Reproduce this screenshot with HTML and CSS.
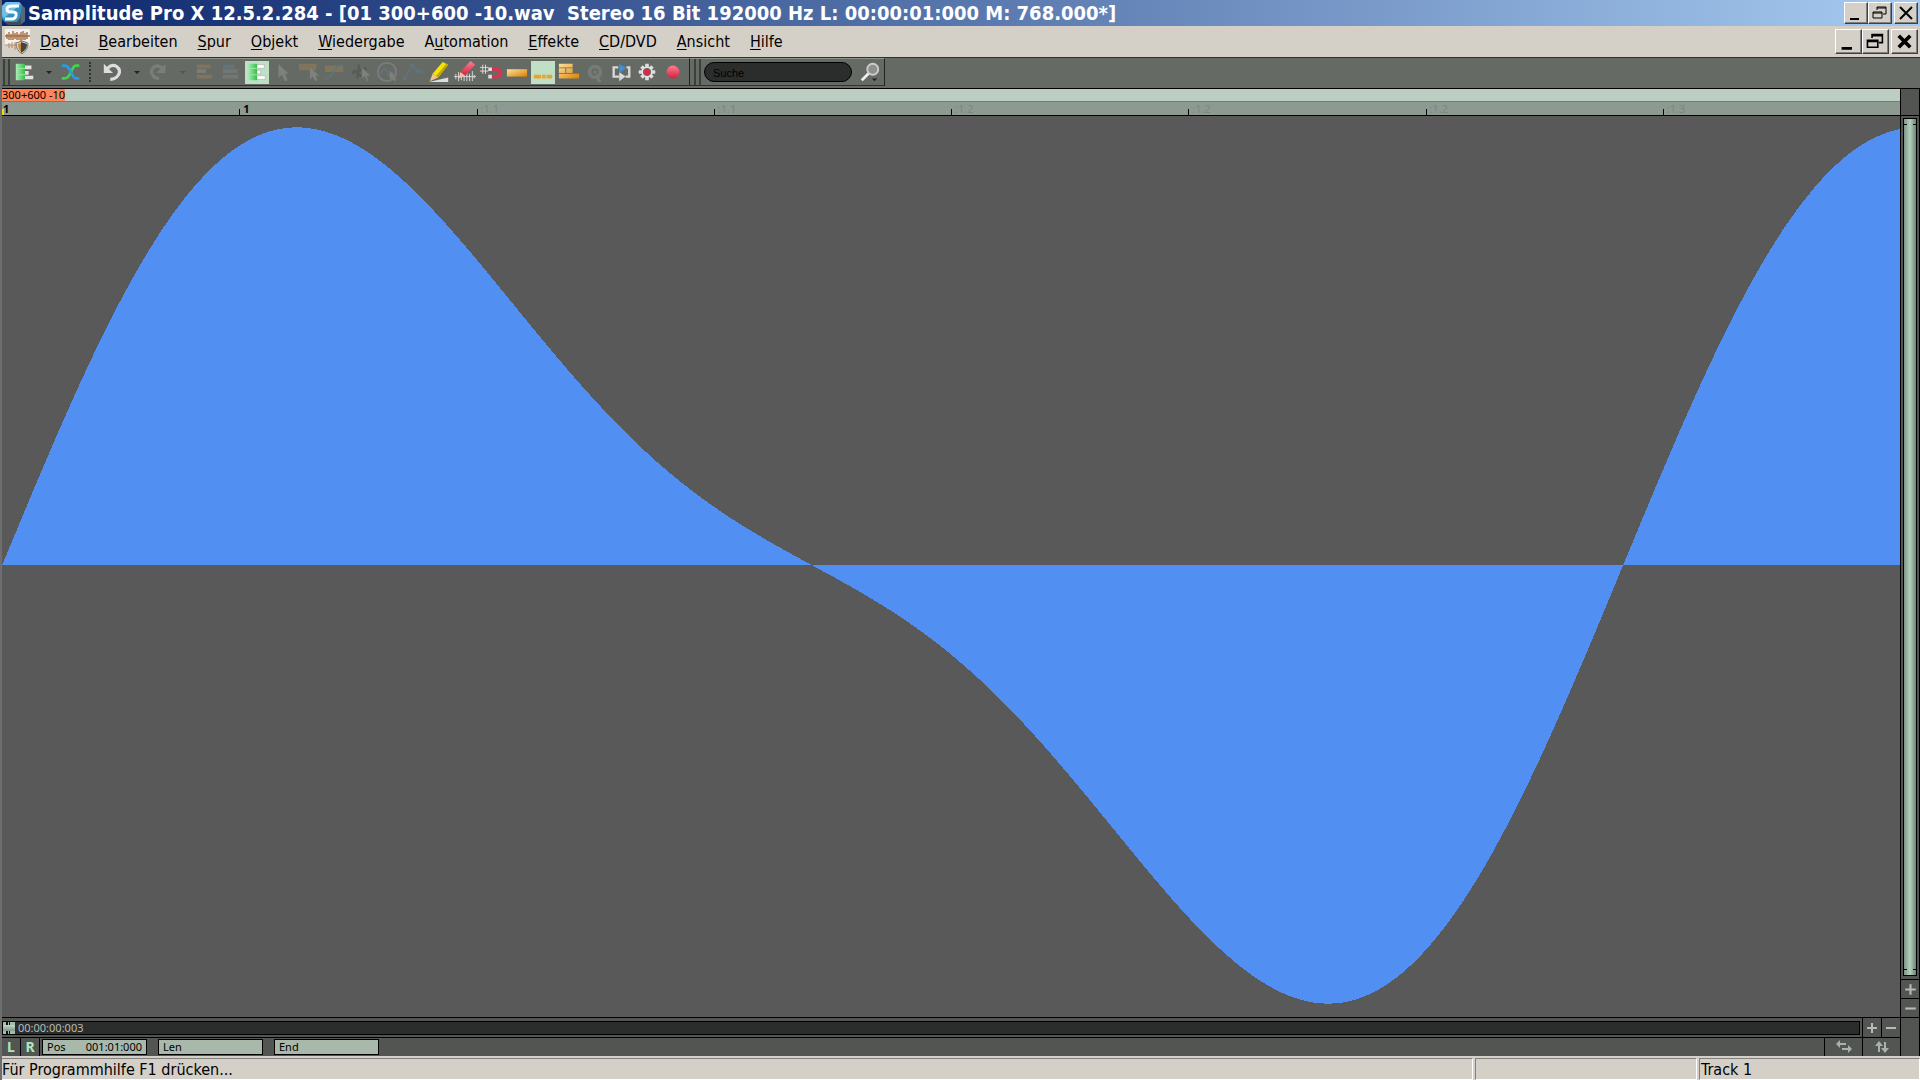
FILE: index.html
```html
<!DOCTYPE html>
<html lang="de">
<head>
  <meta charset="UTF-8">
  <meta name="viewport" content="width=device-width, initial-scale=1.0">
  <title>Samplitude Pro X</title>
  <link rel="stylesheet" href="styles.css">
</head>
<body>
  <header class="titlebar">
    <svg class="app-icon" viewBox="0 0 24 24">
      <path d="M5 3h14l4 4v13l-4 4H6l-5-4z" fill="#3c4c5c"/>
      <path d="M18 3l5 4v13l-4 3z" fill="#56697a"/>
      <path d="M4 1h13l3 3-2 13-3 4H3l-3-3V5z" fill="#2f93c4"/>
      <path d="M4 1h13l2 2L2 17 0 15V5z" fill="#6fc0e4"/>
      <path d="M17 5H10Q5 5 5 8t4 3h2q4 0 3 4-1 3-4 3H3" fill="none" stroke="#fff" stroke-width="3"/>
    </svg>
    <h1>Samplitude Pro X 12.5.2.284 - [01 300+600 -10.wav&nbsp; Stereo 16 Bit 192000 Hz L: 00:00:01:000 M: 768.000*]</h1>
    <div class="win-buttons">
      <button aria-label="Minimieren"><svg viewBox="0 0 20 18"><path d="M4 15h9" stroke="#000" stroke-width="2"/></svg></button>
      <button aria-label="Wiederherstellen"><svg viewBox="0 0 20 18"><path d="M7 6V3h9v7h-3M7 4h9M3 8h9v6H3zM3 9h9" fill="none" stroke="#000"/></svg></button>
      <button class="close" aria-label="Schließen"><svg viewBox="0 0 20 18"><path d="M4 3l12 12M16 3L4 15" stroke="#000" stroke-width="2"/></svg></button>
    </div>
  </header>

  <nav class="menubar">
    <svg class="doc-icon" viewBox="0 0 25 25">
      <rect width="25" height="16" fill="#f4f0ec"/>
      <path d="M0 7h25M2 5v5M4 3v8M6 5v6M8 2v9M10 4v6M12 3v8M14 5v6M16 3v9M18 2v9M20 4v7M22 3v7" stroke="#a56f45" stroke-width="1.4"/>
      <path d="M0 16h12M4 14v5M7 13v6M10 13v8" stroke="#b58a68"/>
      <path d="M11 14l6-2 6 2q0 7-6 11-6-4-6-11z" fill="#e6d6b4" stroke="#777"/>
      <path d="M16 13l6 2q0 6-6 9z" fill="#444"/>
      <path d="M13 15l3-1v9q-3-3-3-8z" fill="#c98a35"/>
    </svg>
    <a href="#"><u>D</u>atei</a>
    <a href="#"><u>B</u>earbeiten</a>
    <a href="#"><u>S</u>pur</a>
    <a href="#"><u>O</u>bjekt</a>
    <a href="#"><u>W</u>iedergabe</a>
    <a href="#">A<u>u</u>tomation</a>
    <a href="#"><u>E</u>ffekte</a>
    <a href="#"><u>C</u>D/DVD</a>
    <a href="#"><u>A</u>nsicht</a>
    <a href="#"><u>H</u>ilfe</a>
    <div class="win-buttons large">
      <button aria-label="Dokument minimieren"><svg viewBox="0 0 20 18"><path d="M4 15h9" stroke="#000" stroke-width="2.4"/></svg></button>
      <button aria-label="Dokument wiederherstellen"><svg viewBox="0 0 20 18"><path d="M7 6V3h9v7h-3M7 4h9M3 8h9v6H3zM3 9h9" fill="none" stroke="#000" stroke-width="1.4"/></svg></button>
      <button class="close" aria-label="Dokument schließen"><svg viewBox="0 0 20 18"><path d="M5 4l10 10M15 4L5 14" stroke="#000" stroke-width="3.2"/></svg></button>
    </div>
  </nav>

  <svg class="defs" width="0" height="0">
    <defs>
      <linearGradient id="orange" x2="1" y2="1"><stop stop-color="#ffe0a0"/><stop offset="1" stop-color="#d98200"/></linearGradient>
      <linearGradient id="green" x2="1"><stop stop-color="#a8eeb2"/><stop offset="1" stop-color="#35c04a"/></linearGradient>
      <linearGradient id="red" x2="0" y2="1"><stop stop-color="#ff7e8e"/><stop offset="1" stop-color="#d3203c"/></linearGradient>
    </defs>
  </svg>

  <div class="toolbar">
    <div class="tools">
      <span class="grip"></span>
      <button class="wide" aria-label="Spuren"><svg viewBox="0 0 24 24"><path d="M12 5h7v4h-7zM12 11h4v4h-4zM12 16h9v4h-9z" fill="#e4e4e4"/><path d="M2 3h10v18H2z" fill="url(#green)"/><path d="M2 8h10M2 15h10" stroke="#a8e0b0"/></svg><i class="arrow"></i></button>
      <button aria-label="Crossfade"><svg viewBox="0 0 24 24"><path d="M2 19h3q4 0 7-7t5-7h4" fill="none" stroke="#42d34a" stroke-width="3"/><path d="M2 5h3q4 0 7 7t5 7h4" fill="none" stroke="#2a9de0" stroke-width="3"/></svg></button>
      <span class="dots"></span>
      <button class="wide" aria-label="Rückgängig"><svg viewBox="0 0 24 24"><path d="M6 8q5-5 10-2 5 4 2 9-3 5-9 5" fill="none" stroke="#ddd" stroke-width="3.4"/><path d="M2 3v10h10z" fill="#ddd"/></svg><i class="arrow"></i></button>
      <button class="wide redo" aria-label="Wiederholen" disabled><svg viewBox="0 0 24 24"><path d="M16 8q-5-5-10-1-4 4-1 8 2 4 7 4" fill="none" stroke="#ccc" stroke-width="3.4"/><path d="M19 3v10H9z" fill="#ccc"/></svg><i class="arrow"></i></button>
      <button aria-label="Objekte" disabled><svg viewBox="0 0 24 24"><path d="M3 4h15v4H3zM3 15h17v4H3z" fill="#f0a030"/><path d="M3 9h10v4H3z" fill="#ccc"/></svg></button>
      <button aria-label="Bereiche" disabled><svg viewBox="0 0 24 24"><path d="M3 4h13v4H3z" fill="#4aa0e0"/><path d="M3 9h16v4H3zM3 15h17v4H3z" fill="#aaa"/></svg></button>
      <button class="active" aria-label="Universalmodus"><svg viewBox="0 0 24 24"><path d="M12 4h8v4h-8zM12 10h4v4h-4zM12 16h9v4h-9z" fill="#fff" stroke="#999" stroke-width=".5"/><path d="M2 3h10v18H2z" fill="url(#green)"/><path d="M2 8h10M2 15h10" stroke="#a8e0b0"/></svg></button>
      <button aria-label="Zeiger" disabled><svg viewBox="0 0 24 24"><path d="M7 3v15l4-3 3 7 3-1-3-7h4z" fill="#ddd"/></svg></button>
      <button aria-label="Objektmaus" disabled><svg viewBox="0 0 24 24"><path d="M1 3h19v7H1z" fill="#f0a030"/><path d="M13 7v13l3-3 3 5 2-1-2-5h4z" fill="#ddd"/></svg></button>
      <button aria-label="Kurvenmodus" disabled><svg viewBox="0 0 24 24"><path d="M1 5h20v7H1z" fill="#f0a030"/><path d="M1 19q6 0 9-7t9-7" fill="none" stroke="#4aa0e0" stroke-width="2"/></svg></button>
      <button aria-label="Schneiden" disabled><svg viewBox="0 0 24 24"><path d="M10 4l-2 15M2 13l16-5M4 10l9 7" stroke="#222" stroke-width="2.6"/><path d="M13 7v12l3-3 3 6 1-1-2-5h4z" fill="#ddd"/></svg></button>
      <button aria-label="Scrubbing" disabled><svg viewBox="0 0 24 24"><circle cx="12" cy="12" r="10" fill="none" stroke="#ccc" stroke-width="2"/><path d="M5 14q4-10 7-2t8 0" fill="none" stroke="#4aa0e0" stroke-width="2"/><path d="M15 10v10l3-2 2 4 2-1-2-5z" fill="#ddd"/></svg></button>
      <button aria-label="Automation zeichnen" disabled><svg viewBox="0 0 24 24"><path d="M3 19L11 5l6 6 6 1" fill="none" stroke="#4aa0e0" stroke-width="1.4"/><path d="M1 17h4v4H1zM9 3h4v4H9zM16 9h4v4h-4z" fill="#4aa0e0"/></svg></button>
      <button aria-label="Stift"><svg viewBox="0 0 24 24"><path d="M1 23l21-5v5z" fill="#ddd"/><path d="M5 14L16 1l6 3L11 18z" fill="#f4e400"/><path d="M9 16L20 3l2 1L11 18z" fill="#c0a800"/><path d="M5 14l6 4-9 4z" fill="#f0c48a"/></svg></button>
      <button aria-label="Wellenform zeichnen"><svg viewBox="0 0 24 24"><path d="M0 17h24M2 14v6M5 12v10M8 14v7M11 15v7M14 12v10M17 14v8M20 11v11M22 15v4" stroke="#ddd"/><path d="M7 12L18 0l5 4-11 12z" fill="url(#red)"/><path d="M7 12l5 4-7 3z" fill="#f1c0a0"/></svg></button>
      <button aria-label="Raster"><svg viewBox="0 0 24 24"><path d="M3 4v10M6 4v10M0 7h9M0 11h9" stroke="#ddd"/><path d="M13 9h5q4 0 4 4t-4 4h-5" fill="none" stroke="#e02f4c" stroke-width="3.4"/><path d="M9 7h4v4H9zM9 15h4v4H9z" fill="#ddd"/></svg></button>
      <button aria-label="Objekt"><svg viewBox="0 0 24 24"><path d="M1 9h22v8H1z" fill="url(#orange)"/></svg></button>
      <button class="active" aria-label="Takes"><svg viewBox="0 0 24 24"><path d="M2 15h8v4H2zM11 15h4v4h-4zM16 15h6v4h-6z" fill="#eaa32e"/></svg></button>
      <button aria-label="Gruppe"><svg viewBox="0 0 24 24"><path d="M1 3h15v4H1zM1 8h7v5H1zM9 8h7v5H9zM1 14h22v5H1z" fill="url(#orange)"/></svg></button>
      <button aria-label="Quantisieren" disabled><svg viewBox="0 0 24 24"><circle cx="12" cy="12" r="6" fill="none" stroke="#bbb" stroke-width="4"/><circle cx="12" cy="12" r="2" fill="#bbb"/><path d="M12 11l7 12h-4z" fill="#ccc"/></svg></button>
      <button aria-label="Loop"><svg viewBox="0 0 24 24"><path d="M9 7H4v10h6M17 17h4V7h-3" fill="none" stroke="#d8d8d8" stroke-width="2.6"/><path d="M10 12l7 5-7 5z" fill="#d8d8d8"/><path d="M10 3l8 5-8 5z" fill="#3e8fd8"/></svg></button>
      <button aria-label="Einstellungen"><svg viewBox="0 0 24 24"><path d="M12 3v18M3 12h18M6 6l12 12M18 6L6 18" stroke="#ddd" stroke-width="4"/><circle cx="12" cy="12" r="6" fill="#e4e4e4"/><circle cx="12" cy="12" r="4" fill="#dc2840" stroke="#666a65" stroke-width="1"/></svg></button>
      <button aria-label="Aufnahme"><svg viewBox="0 0 24 24"><circle cx="12" cy="12" r="7" fill="url(#red)"/></svg></button>
    </div>
    <div class="search">
      <span class="grip"></span>
      <input type="text" placeholder="Suche" aria-label="Suche">
      <button aria-label="Suchen"><svg viewBox="0 0 24 24"><path d="M3 21l8-8" stroke="#eee" stroke-width="3"/><circle cx="15" cy="9" r="6" fill="#8d918e" stroke="#ccc" stroke-width="2"/><path d="M14 19h6l-3 3z" fill="#222"/></svg></button>
    </div>
  </div>

  <main class="editor">
    <div class="project">
      <div class="marker-bar"><span>300+600 -10</span></div>
      <div class="ruler">
        <span class="strong first">1</span>
        <span class="strong">1</span>
        <span>:1.1</span>
        <span>:1.1</span>
        <span>:1.2</span>
        <span>:1.2</span>
        <span>:1.2</span>
        <span>:1.3</span>
      </div>
      <svg class="wave" viewBox="0 0 1898 900" preserveAspectRatio="none"><path id="wave-path"/></svg>
      <div class="scroll-row">
        <div class="track"><span class="thumb"></span>00:00:00:003</div>
        <button aria-label="Horizontal vergrößern"><svg viewBox="0 0 18 18"><path d="M9 4v10M4 9h10" stroke="#b4bcb6" stroke-width="2"/></svg></button>
        <button aria-label="Horizontal verkleinern"><svg viewBox="0 0 18 18"><path d="M4 9h10" stroke="#b4bcb6" stroke-width="2"/></svg></button>
      </div>
      <div class="pos-row">
        <button class="channel">L</button>
        <button class="channel">R</button>
        <label>Pos <input type="text" value="001:01:000"></label>
        <label>Len <input type="text"></label>
        <label>End <input type="text"></label>
        <button class="zoom first" aria-label="Ganze Breite"><svg viewBox="0 0 18 18"><path d="M2 6h9M7 11h9" stroke="#a9b1ab" stroke-width="2"/><path d="M5 2v8L1 6zM13 7v8l4-4z" fill="#a9b1ab"/></svg></button>
        <button class="zoom" aria-label="Ganze Höhe"><svg viewBox="0 0 18 18"><path d="M6 4v10M12 4v10" stroke="#a9b1ab" stroke-width="2"/><path d="M2 8l4-5 4 5zM8 10l4 5 4-5z" fill="#a9b1ab"/></svg></button>
      </div>
    </div>
    <aside class="side">
      <div class="corner"></div>
      <div class="v-track"><span class="v-thumb"></span></div>
      <button aria-label="Vertikal vergrößern"><svg viewBox="0 0 18 18"><path d="M9 4v10M4 9h10" stroke="#b4bcb6" stroke-width="2"/></svg></button>
      <button aria-label="Vertikal verkleinern"><svg viewBox="0 0 18 18"><path d="M4 9h10" stroke="#b4bcb6" stroke-width="2"/></svg></button>
      <div class="bottom-corner"></div>
    </aside>
  </main>

  <footer class="statusbar">
    <span class="hint">Für Programmhilfe F1 drücken...</span>
    <span class="empty"></span>
    <span class="track-name">Track 1</span>
  </footer>

  <script>
    // 300 Hz plus 600 Hz at -10 dB
    const period = 1621;
    const zero = 449;
    const amp = 381;
    const second = Math.pow(10, -10 / 20);
    let d = 'M0 ' + zero;
    for (let x = 0; x <= 1898; x += 2) {
      const t = 2 * Math.PI * x / period;
      const y = zero - amp * (Math.sin(t) + second * Math.sin(2 * t));
      d += 'L' + x + ' ' + y.toFixed(1);
    }
    document.getElementById('wave-path').setAttribute('d', d + 'V' + zero + 'Z');
  </script>
</body>
</html>
```
FILE: styles.css
```css
* {
  margin: 0;
  padding: 0;
  box-sizing: border-box;
}

body {
  height: 100vh;
  display: flex;
  flex-direction: column;
  overflow: hidden;
  background: #555;
  border-left: 2px solid #6e6e6e;
  font-family: 'DejaVu Sans Condensed', 'DejaVu Sans', sans-serif;
  font-stretch: condensed;
  font-size: 16px;
  color: #000;
}

button {
  border: none;
  background: none;
  font: inherit;
}

svg {
  display: block;
}

.defs {
  position: absolute;
}

/* Title bar */
.titlebar {
  height: 26px;
  display: flex;
  align-items: center;
  background: linear-gradient(to right, #0a246a, #a6caf0);
  color: #fff;
}

.titlebar h1 {
  flex: 1;
  font-size: 20px;
  line-height: 26px;
  white-space: nowrap;
}

.app-icon {
  width: 24px;
  height: 24px;
  margin-right: 2px;
}

.win-buttons {
  display: flex;
  margin-left: auto;
  padding-right: 2px;
}

.win-buttons button {
  width: 24px;
  height: 22px;
  background: #d4d0c8;
  border: 1px solid;
  border-color: #fff #404040 #404040 #fff;
  box-shadow: inset -1px -1px #808080;
}

.win-buttons svg {
  width: 20px;
  height: 18px;
  margin: auto;
}

.win-buttons .close {
  margin-left: 2px;
}

.win-buttons.large button {
  width: 27px;
  height: 25px;
}

.win-buttons.large svg {
  width: 23px;
  height: 21px;
}

/* Menu */
.menubar {
  height: 31px;
  display: flex;
  align-items: center;
  gap: 20px;
  background: #d4d0c8;
}

.menubar a {
  color: #000;
  text-decoration: none;
  white-space: nowrap;
}

.menubar u {
  text-underline-offset: 2px;
}

.doc-icon {
  width: 25px;
  height: 25px;
  margin: 0 -10px 0 3px;
}

/* Toolbar */
.toolbar {
  height: 32px;
  display: flex;
  background: #666a65;
  border-top: 1px solid #2b332b;
  border-bottom: 1px solid #000;
}

.tools,
.search {
  display: flex;
  align-items: center;
  height: 28px;
  border-top: 1px solid #8c948c;
  border-bottom: 1px solid #333;
  border-right: 1px solid #222;
}

.tools {
  padding-right: 2px;
}

.grip {
  width: 7px;
  height: 26px;
  margin: 0 3px 0 1px;
  border-left: 2px solid #3c403c;
  border-right: 2px solid #3c403c;
}

.toolbar button {
  width: 24px;
  height: 23px;
  margin-right: 2px;
  display: flex;
  align-items: center;
}

.toolbar button svg {
  width: 22px;
  height: 22px;
  margin: 0 1px;
  flex: none;
}

.toolbar button.wide {
  width: 44px;
}

.toolbar button.active {
  background: #bfe0c5;
}

.toolbar button:disabled svg {
  opacity: 0.2;
}

.arrow {
  margin-left: 9px;
  border: 3px solid transparent;
  border-top-color: #222;
  border-bottom: none;
}

.redo .arrow {
  opacity: 0.3;
}

.dots {
  height: 20px;
  margin: 0 10px 0 4px;
  border-left: 2px dotted #333;
}

.search {
  padding-left: 3px;
}

.search input {
  width: 148px;
  height: 20px;
  margin-right: 6px;
  padding: 2px 8px 0;
  background: #2b2d2c;
  border: 1px solid #000;
  border-radius: 10px;
  font-family: 'Liberation Sans', sans-serif;
  font-size: 11px;
}

.search input::placeholder {
  color: #000;
}

/* Editor */
.editor {
  flex: 1;
  min-height: 0;
  display: flex;
  font-family: 'Noto Sans', sans-serif;
  font-stretch: normal;
  font-size: 11px;
}

.project {
  flex: 1;
  min-width: 0;
  display: flex;
  flex-direction: column;
}

.marker-bar {
  height: 13px;
  background: #bccdc1;
  border-bottom: 1px solid #6f7d74;
  line-height: 12px;
}

.marker-bar span {
  display: inline-block;
  background: #ff8558;
}

.ruler {
  height: 14px;
  display: grid;
  grid-template-columns: repeat(8, 1fr);
  background: #8d9a91;
  border-bottom: 1px solid #000;
  line-height: 14px;
  color: #7b877f;
}

.ruler span {
  height: 13px;
  padding-left: 4px;
  background: linear-gradient(#000, #000) left bottom / 1px 6px no-repeat;
}

.ruler .strong {
  color: #000;
  font-weight: bold;
}

.ruler .first {
  padding-left: 1px;
  background: linear-gradient(#f0e000, #f0e000) left bottom / 2px 6px no-repeat;
}

.wave {
  flex: 1;
  min-height: 0;
  width: 100%;
  background: #595959;
  fill: #528ff3;
  shape-rendering: crispEdges;
}

.scroll-row {
  height: 21px;
  display: flex;
  align-items: center;
  background: #525552;
  border-top: 1px solid #000;
  border-bottom: 1px solid #000;
}

.scroll-row button,
.side button {
  width: 19px;
  height: 19px;
  border-left: 1px solid #000;
}

.scroll-row .track {
  flex: 1;
  height: 14px;
  margin-right: 2px;
  display: flex;
  align-items: center;
  gap: 3px;
  background: #2b2d2c;
  border: 1px solid #000;
  line-height: 12px;
  color: #b4bcb6;
}

.thumb {
  width: 12px;
  height: 12px;
  padding: 3px 0;
  background: linear-gradient(#c1d9c8, #80968a) content-box,
    linear-gradient(to right, #a5bbac 3px, #111 3px, #111 5px, #a5bbac 5px, #a5bbac 6px, #111 6px, #111 7px, #a5bbac 7px);
}

.pos-row {
  height: 18px;
  display: flex;
  align-items: center;
  background: #525552;
}

.channel {
  width: 19px;
  height: 18px;
  border-right: 1px solid #000;
  font-size: 14px;
  font-weight: bold;
  line-height: 18px;
  color: #b0e8bc;
}

.pos-row label {
  width: 105px;
  height: 16px;
  margin: 0 9px 0 2px;
  padding: 0 4px;
  display: flex;
  align-items: center;
  line-height: 14px;
  background: #a8b9ac;
  border: 1px solid #000;
}

.pos-row input {
  flex: 1;
  min-width: 0;
  height: 14px;
  border: none;
  background: none;
  font: inherit;
  text-align: right;
}

.zoom {
  width: 38px;
  height: 18px;
  border-left: 1px solid #000;
}

.zoom.first {
  margin-left: auto;
}

.zoom svg {
  width: 18px;
  height: 18px;
  margin: auto;
}

.side {
  width: 20px;
  display: flex;
  flex-direction: column;
  background: #525552;
  border-left: 1px solid #000;
  border-right: 1px solid #000;
}

.side button {
  border-left: none;
  border-top: 1px solid #000;
}

.corner {
  height: 27px;
  border-bottom: 1px solid #000;
}

.v-track {
  flex: 1;
  padding: 2px 2px 3px;
}

.v-thumb {
  display: flex;
  flex-direction: column;
  justify-content: space-between;
  height: 100%;
  padding: 5px 0;
  background: linear-gradient(to right, #7e9588, #b4d0bd, #6d8276);
  border: 1px solid #000;
}

/* end stops of the slider */
.v-thumb::before,
.v-thumb::after {
  content: '';
  height: 1px;
  background: linear-gradient(to right, #000 3px, transparent 3px, transparent 9px, #000 9px);
}

.bottom-corner {
  height: 39px;
  border-top: 1px solid #000;
}

/* Status bar */
.statusbar {
  height: 24px;
  display: flex;
  gap: 2px;
  padding-top: 2px;
  background: #d4d0c8;
}

.statusbar span {
  border: 1px solid;
  border-color: #808080 #fff #fff #808080;
  line-height: 21px;
}

.statusbar .hint {
  flex: 1;
  border-left: none;
}

.statusbar .empty {
  width: 222px;
}

.statusbar .track-name {
  width: 221px;
  padding-left: 1px;
}
```
